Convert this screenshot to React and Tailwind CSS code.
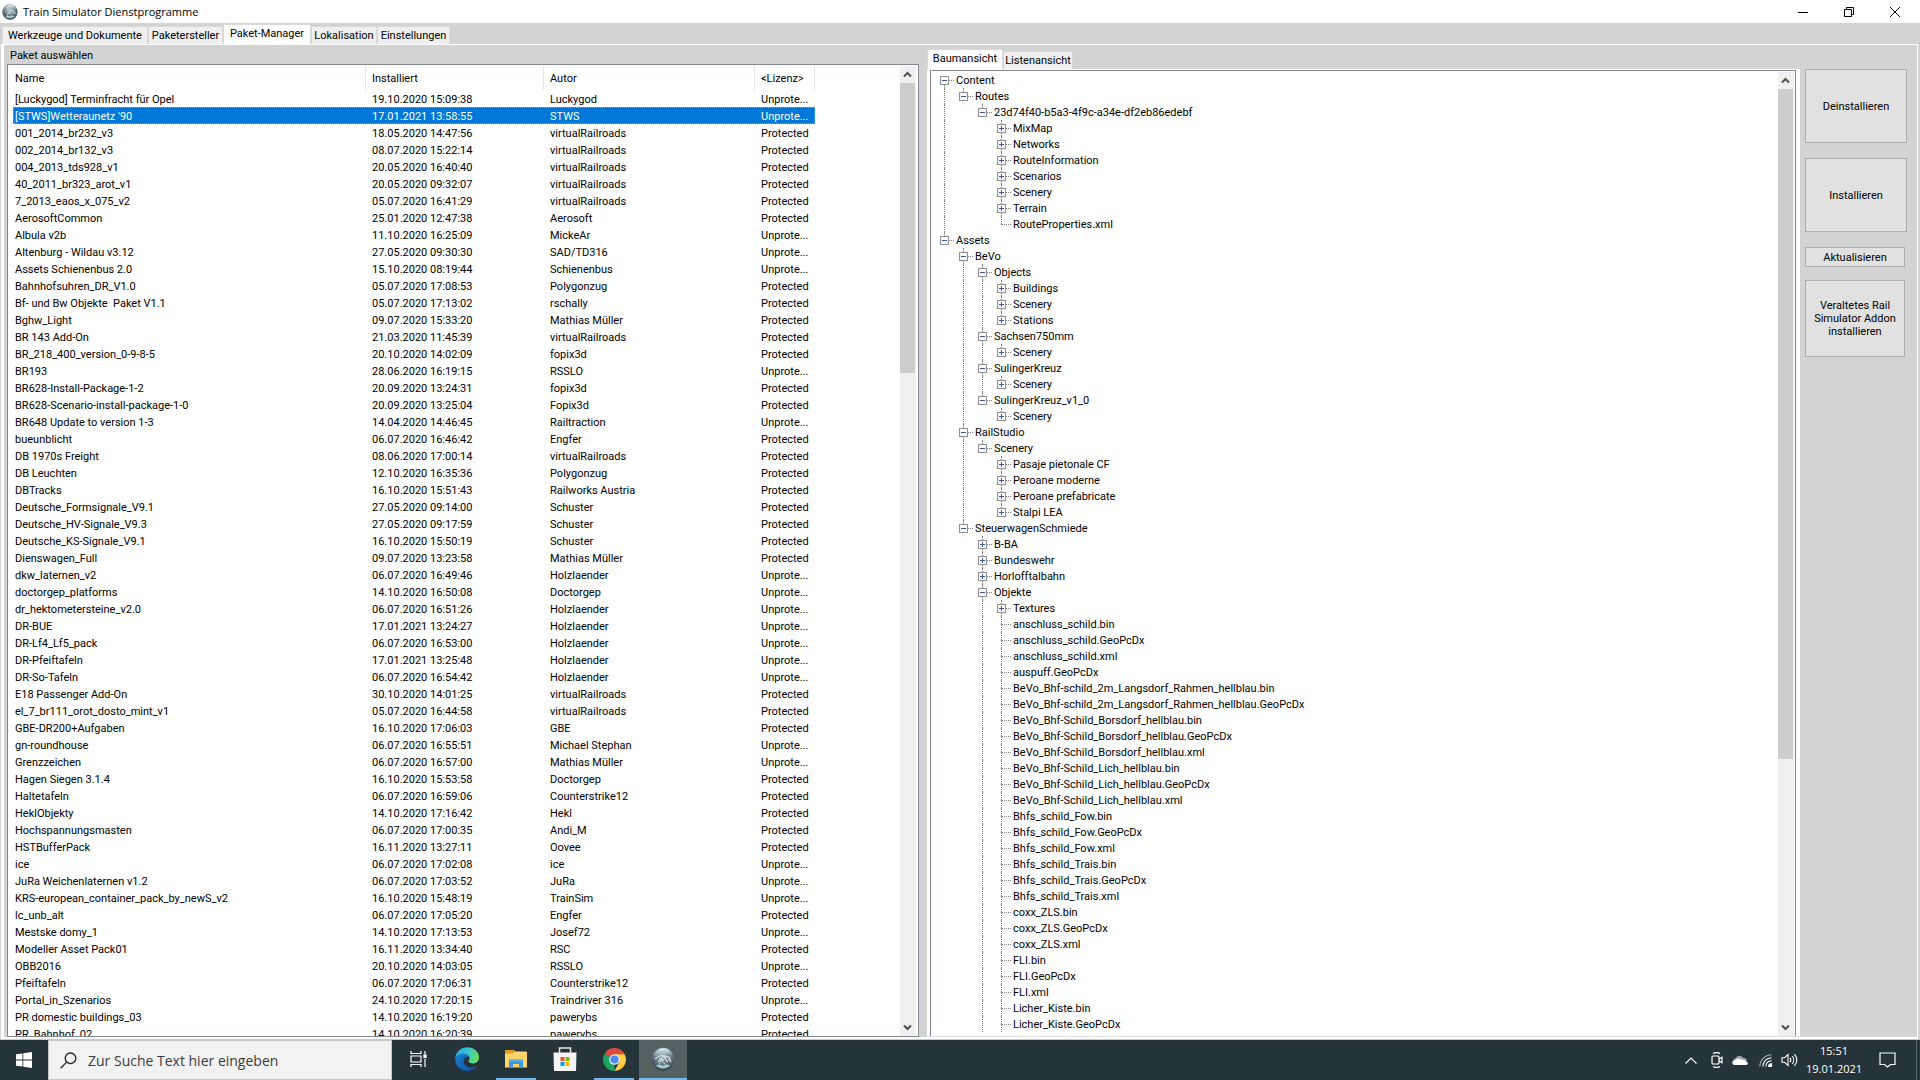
import { clsx } from "clsx";

const U = "Unprote...";
const P = "Protected";

const packages = [
  ["[Luckygod] Terminfracht für Opel", "19.10.2020 15:09:38", "Luckygod", U],
  ["[STWS]Wetteraunetz '90", "17.01.2021 13:58:55", "STWS", U],
  ["001_2014_br232_v3", "18.05.2020 14:47:56", "virtualRailroads", P],
  ["002_2014_br132_v3", "08.07.2020 15:22:14", "virtualRailroads", P],
  ["004_2013_tds928_v1", "20.05.2020 16:40:40", "virtualRailroads", P],
  ["40_2011_br323_arot_v1", "20.05.2020 09:32:07", "virtualRailroads", P],
  ["7_2013_eaos_x_075_v2", "05.07.2020 16:41:29", "virtualRailroads", P],
  ["AerosoftCommon", "25.01.2020 12:47:38", "Aerosoft", P],
  ["Albula v2b", "11.10.2020 16:25:09", "MickeAr", U],
  ["Altenburg - Wildau v3.12", "27.05.2020 09:30:30", "SAD/TD316", U],
  ["Assets Schienenbus 2.0", "15.10.2020 08:19:44", "Schienenbus", U],
  ["Bahnhofsuhren_DR_V1.0", "05.07.2020 17:08:53", "Polygonzug", P],
  ["Bf- und Bw Objekte  Paket V1.1", "05.07.2020 17:13:02", "rschally", P],
  ["Bghw_Light", "09.07.2020 15:33:20", "Mathias Müller", P],
  ["BR 143 Add-On", "21.03.2020 11:45:39", "virtualRailroads", P],
  ["BR_218_400_version_0-9-8-5", "20.10.2020 14:02:09", "fopix3d", P],
  ["BR193", "28.06.2020 16:19:15", "RSSLO", U],
  ["BR628-Install-Package-1-2", "20.09.2020 13:24:31", "fopix3d", P],
  ["BR628-Scenario-install-package-1-0", "20.09.2020 13:25:04", "Fopix3d", P],
  ["BR648 Update to version 1-3", "14.04.2020 14:46:45", "Railtraction", U],
  ["bueunblicht", "06.07.2020 16:46:42", "Engfer", P],
  ["DB 1970s Freight", "08.06.2020 17:00:14", "virtualRailroads", P],
  ["DB Leuchten", "12.10.2020 16:35:36", "Polygonzug", P],
  ["DBTracks", "16.10.2020 15:51:43", "Railworks Austria", P],
  ["Deutsche_Formsignale_V9.1", "27.05.2020 09:14:00", "Schuster", P],
  ["Deutsche_HV-Signale_V9.3", "27.05.2020 09:17:59", "Schuster", P],
  ["Deutsche_KS-Signale_V9.1", "16.10.2020 15:50:19", "Schuster", P],
  ["Dienswagen_Full", "09.07.2020 13:23:58", "Mathias Müller", P],
  ["dkw_laternen_v2", "06.07.2020 16:49:46", "Holzlaender", U],
  ["doctorgep_platforms", "14.10.2020 16:50:08", "Doctorgep", U],
  ["dr_hektometersteine_v2.0", "06.07.2020 16:51:26", "Holzlaender", U],
  ["DR-BUE", "17.01.2021 13:24:27", "Holzlaender", U],
  ["DR-Lf4_Lf5_pack", "06.07.2020 16:53:00", "Holzlaender", U],
  ["DR-Pfeiftafeln", "17.01.2021 13:25:48", "Holzlaender", U],
  ["DR-So-Tafeln", "06.07.2020 16:54:42", "Holzlaender", U],
  ["E18 Passenger Add-On", "30.10.2020 14:01:25", "virtualRailroads", P],
  ["el_7_br111_orot_dosto_mint_v1", "05.07.2020 16:44:58", "virtualRailroads", P],
  ["GBE-DR200+Aufgaben", "16.10.2020 17:06:03", "GBE", P],
  ["gn-roundhouse", "06.07.2020 16:55:51", "Michael Stephan", U],
  ["Grenzzeichen", "06.07.2020 16:57:00", "Mathias Müller", U],
  ["Hagen Siegen 3.1.4", "16.10.2020 15:53:58", "Doctorgep", P],
  ["Haltetafeln", "06.07.2020 16:59:06", "Counterstrike12", P],
  ["HeklObjekty", "14.10.2020 17:16:42", "Hekl", P],
  ["Hochspannungsmasten", "06.07.2020 17:00:35", "Andi_M", P],
  ["HSTBufferPack", "16.11.2020 13:27:11", "Oovee", P],
  ["ice", "06.07.2020 17:02:08", "ice", U],
  ["JuRa Weichenlaternen v1.2", "06.07.2020 17:03:52", "JuRa", U],
  ["KRS-european_container_pack_by_newS_v2", "16.10.2020 15:48:19", "TrainSim", U],
  ["lc_unb_alt", "06.07.2020 17:05:20", "Engfer", P],
  ["Mestske domy_1", "14.10.2020 17:13:53", "Josef72", U],
  ["Modeller Asset Pack01", "16.11.2020 13:34:40", "RSC", P],
  ["OBB2016", "20.10.2020 14:03:05", "RSSLO", U],
  ["Pfeiftafeln", "06.07.2020 17:06:31", "Counterstrike12", P],
  ["Portal_in_Szenarios", "24.10.2020 17:20:15", "Traindriver 316", U],
  ["PR domestic buildings_03", "14.10.2020 16:19:20", "pawerybs", P],
  ["PR_Bahnhof_02", "14.10.2020 16:20:39", "pawerybs", P],
];

// [depth, toggle, label]: "-" open folder, "+" closed folder, "" file
const nodes = [
  [0, "-", "Content"],
  [1, "-", "Routes"],
  [2, "-", "23d74f40-b5a3-4f9c-a34e-df2eb86edebf"],
  [3, "+", "MixMap"],
  [3, "+", "Networks"],
  [3, "+", "RouteInformation"],
  [3, "+", "Scenarios"],
  [3, "+", "Scenery"],
  [3, "+", "Terrain"],
  [3, "", "RouteProperties.xml"],
  [0, "-", "Assets"],
  [1, "-", "BeVo"],
  [2, "-", "Objects"],
  [3, "+", "Buildings"],
  [3, "+", "Scenery"],
  [3, "+", "Stations"],
  [2, "-", "Sachsen750mm"],
  [3, "+", "Scenery"],
  [2, "-", "SulingerKreuz"],
  [3, "+", "Scenery"],
  [2, "-", "SulingerKreuz_v1_0"],
  [3, "+", "Scenery"],
  [1, "-", "RailStudio"],
  [2, "-", "Scenery"],
  [3, "+", "Pasaje pietonale CF"],
  [3, "+", "Peroane moderne"],
  [3, "+", "Peroane prefabricate"],
  [3, "+", "Stalpi LEA"],
  [1, "-", "SteuerwagenSchmiede"],
  [2, "+", "B-BA"],
  [2, "+", "Bundeswehr"],
  [2, "+", "Horlofftalbahn"],
  [2, "-", "Objekte"],
  [3, "+", "Textures"],
  [3, "", "anschluss_schild.bin"],
  [3, "", "anschluss_schild.GeoPcDx"],
  [3, "", "anschluss_schild.xml"],
  [3, "", "auspuff.GeoPcDx"],
  [3, "", "BeVo_Bhf-schild_2m_Langsdorf_Rahmen_hellblau.bin"],
  [3, "", "BeVo_Bhf-schild_2m_Langsdorf_Rahmen_hellblau.GeoPcDx"],
  [3, "", "BeVo_Bhf-Schild_Borsdorf_hellblau.bin"],
  [3, "", "BeVo_Bhf-Schild_Borsdorf_hellblau.GeoPcDx"],
  [3, "", "BeVo_Bhf-Schild_Borsdorf_hellblau.xml"],
  [3, "", "BeVo_Bhf-Schild_Lich_hellblau.bin"],
  [3, "", "BeVo_Bhf-Schild_Lich_hellblau.GeoPcDx"],
  [3, "", "BeVo_Bhf-Schild_Lich_hellblau.xml"],
  [3, "", "Bhfs_schild_Fow.bin"],
  [3, "", "Bhfs_schild_Fow.GeoPcDx"],
  [3, "", "Bhfs_schild_Fow.xml"],
  [3, "", "Bhfs_schild_Trais.bin"],
  [3, "", "Bhfs_schild_Trais.GeoPcDx"],
  [3, "", "Bhfs_schild_Trais.xml"],
  [3, "", "coxx_ZLS.bin"],
  [3, "", "coxx_ZLS.GeoPcDx"],
  [3, "", "coxx_ZLS.xml"],
  [3, "", "FLI.bin"],
  [3, "", "FLI.GeoPcDx"],
  [3, "", "FLI.xml"],
  [3, "", "Licher_Kiste.bin"],
  [3, "", "Licher_Kiste.GeoPcDx"],
];

// Levels whose list goes on below the visible part of the tree
const continuedLevels = [2, 3];

function hasLaterSibling(index, depth) {
  for (let i = index + 1; i < nodes.length; i++) {
    if (nodes[i][0] < depth) return false;
    if (nodes[i][0] === depth) return true;
  }
  return continuedLevels.includes(depth);
}

function AppGlobe({ className }) {
  return (
    <svg viewBox="0 0 24 24" className={className} aria-hidden="true">
      <defs>
        <radialGradient id="globe" cx="0.5" cy="0.3" r="0.75">
          <stop offset="0" stopColor="#a4b4bb" />
          <stop offset="0.6" stopColor="#5c6f78" />
          <stop offset="1" stopColor="#2c3a42" />
        </radialGradient>
        <linearGradient id="gloss" x1="0" y1="0" x2="0" y2="1">
          <stop offset="0" stopColor="#eef6f8" />
          <stop offset="1" stopColor="#9db4bc" stopOpacity="0.3" />
        </linearGradient>
      </defs>
      <circle cx="12" cy="12" r="11.5" fill="url(#globe)" />
      <path d="M2.500 8.500C4 4 8 1.300 12.500 1.300s8 2.700 9.200 7C18 6.500 14 6.200 11 7.500S5 9.500 2.500 8.500z" fill="url(#gloss)" />
      <path d="M4 12c3-3 6-4 9-3l5 1c1 2 1 3 2 5" fill="none" stroke="#cfdbe0" strokeWidth="1.300" />
      <path d="M7 15l3-4 2 3 2-4 2 5 2-3M8 12l6 5M12 9l-4 8" fill="none" stroke="#dfe8eb" strokeWidth="0.900" />
      <path d="M4.500 18c3 4 11 5 15 0-1 .2-3 .3-4-1-2 2-5 2-7 0-1 1-3 1.500-4 1z" fill="#b8dbe2" opacity="0.85" />
    </svg>
  );
}

function Tab({ active, width, children }) {
  return (
    <button
      type="button"
      role="tab"
      aria-selected={!!active}
      className={clsx(
        "border border-b-0 border-[#d9d9d9] whitespace-nowrap text-center",
        width,
        active ? "h-5 bg-white pb-0.5" : "h-[18px] bg-[#f0f0f0]"
      )}
    >
      {children}
    </button>
  );
}

function ScrollArrow({ down }) {
  return (
    <button type="button" aria-label={down ? "Nach unten" : "Nach oben"} className="flex h-[17px] w-[15px] shrink-0 items-center justify-center bg-[#f0f0f0]">
      <svg width="9" height="7" viewBox="0 0 9 7" fill="none" stroke="#505050" strokeWidth="2">
        <path d={down ? "M1 1.500L4.500 5 8 1.500" : "M1 5.500L4.500 2 8 5.500"} />
      </svg>
    </button>
  );
}

function Scrollbar({ thumb }) {
  return (
    <div className="flex w-4 shrink-0 flex-col bg-[#f0f0f0]">
      <ScrollArrow />
      <div className="min-h-0 flex-1">
        <div className={clsx("w-[15px] bg-[#cdcdcd]", thumb)} />
      </div>
      <ScrollArrow down />
    </div>
  );
}

function PackageTable() {
  const head = "h-6 border-r border-[#e5e5e5] py-0 pt-0.5 text-left font-normal";
  const cell = "truncate py-0 pr-0 pt-0.5 leading-[15px]";
  return (
    <table className="w-[802px] shrink-0 table-fixed border-separate border-spacing-0">
      <colgroup>
        <col className="w-[353px]" />
        <col className="w-[178px]" />
        <col className="w-[211px]" />
        <col className="w-[60px]" />
      </colgroup>
      <thead>
        <tr>
          <th className={clsx(head, "pl-0.5")}>Name</th>
          <th className={clsx(head, "pl-1.5")}>Installiert</th>
          <th className={clsx(head, "pl-1.5")}>Autor</th>
          <th className={clsx(head, "pl-1.5")}>&lt;Lizenz&gt;</th>
        </tr>
      </thead>
      <tbody>
        {packages.map(([name, date, author, license], i) => (
          <tr
            key={name}
            aria-selected={i === 1}
            className={clsx("h-[17px]", i === 1 && "bg-[#0078d7] text-white outline-1 -outline-offset-1 outline-dotted outline-[#ff8728]")}
          >
            <td className={clsx(cell, "pl-0.5 whitespace-pre")}>{name}</td>
            <td className={clsx(cell, "pl-1.5")}>{date}</td>
            <td className={clsx(cell, "pl-1.5")}>{author}</td>
            <td className={clsx(cell, "pl-1.5")}>{license}</td>
          </tr>
        ))}
      </tbody>
    </table>
  );
}

function Toggle({ kind }) {
  return (
    <button type="button" aria-label={kind === "+" ? "Erweitern" : "Reduzieren"} className="h-[9px] w-[9px] shrink-0">
      <svg width="9" height="9" viewBox="0 0 9 9" shapeRendering="crispEdges">
        <rect width="9" height="9" fill="#919191" />
        <rect x="1" y="1" width="7" height="7" fill="#fbfbfb" />
        <rect x="2" y="4" width="5" height="1" fill="#3b57a0" />
        {kind === "+" && <rect x="4" y="2" width="1" height="5" fill="#3b57a0" />}
      </svg>
    </button>
  );
}

function TreeRow({ index }) {
  const [depth, kind, label] = nodes[index];
  const guides = Array.from({ length: depth }, (_, d) => hasLaterSibling(index, d));
  return (
    <li className="flex h-4 items-center whitespace-nowrap">
      {guides.map((on, d) => (
        <span key={d} className="flex h-full w-[19px] shrink-0 pl-[9px]">
          {on && <span className="border-l border-dotted border-[#808080]" />}
        </span>
      ))}
      <span className="grid h-full w-[19px] shrink-0 items-center [&>*]:col-start-1 [&>*]:row-start-1">
        <span className="flex h-full flex-col pl-[9px]">
          <span className={clsx("h-2", index > 0 && "border-l border-dotted border-[#808080]")} />
          <span className={clsx("h-2", hasLaterSibling(index, depth) && "border-l border-dotted border-[#808080]")} />
        </span>
        <span className="ml-[9px] border-t border-dotted border-[#808080]" />
        {kind && (
          <span className="flex pl-[5px]">
            <Toggle kind={kind} />
          </span>
        )}
      </span>
      <span className="pt-0.5 pl-0.5 leading-[14px]">{label}</span>
    </li>
  );
}

function ActionButton({ className, children }) {
  return (
    <button type="button" className={clsx("border border-[#adadad] bg-[#e1e1e1] px-2 leading-[13px]", className)}>
      {children}
    </button>
  );
}

function TaskButton({ label, running, active, children }) {
  return (
    <button
      type="button"
      aria-label={label}
      className={clsx("flex h-full w-12 shrink-0 flex-col items-center", active && "bg-[#546163]")}
    >
      <span className="flex flex-1 items-center">{children}</span>
      <span className={clsx("h-0.5", active ? "w-full" : "w-10", running && "bg-[#76b9ed]")} />
    </button>
  );
}

function Taskbar() {
  return (
    <footer className="flex h-10 shrink-0 items-center bg-[#243439] font-['Open_Sans',sans-serif] text-white">
      <button type="button" aria-label="Start" className="flex h-full w-12 shrink-0 items-center justify-center">
        <svg width="16" height="16" viewBox="0 0 16 16" fill="#fff">
          <path d="M0 2.300L6.500 1.400V7.600H0zM7.300 1.300L16 0V7.600H7.300zM0 8.400H6.500V14.600L0 13.700zM7.300 8.400H16V16L7.300 14.700z" />
        </svg>
      </button>
      <label className="flex h-full w-[344px] shrink-0 items-center gap-[11px] border border-[#c8c8c8] bg-[#f2f2f2] pl-[11px] text-[#3b3b3b]">
        <svg width="17" height="17" viewBox="0 0 17 17" fill="none" stroke="#222" strokeWidth="1.300">
          <circle cx="10.500" cy="6.300" r="5.300" />
          <path d="M6.700 10.100L0.600 16.300" />
        </svg>
        <input type="text" aria-label="Suche" placeholder="Zur Suche Text hier eingeben" className="min-w-0 flex-1 bg-transparent pt-0.5 text-sm outline-none placeholder:text-[#3b3b3b] placeholder:opacity-100" />
      </label>
      <div className="flex h-full gap-px pl-0.5">
        <TaskButton label="Taskansicht">
          <svg width="17" height="16" viewBox="0 0 17 16" fill="none" stroke="#fff" strokeWidth="1.200">
            <path d="M1 0v2.500h10V0M1 16v-2.500h10V16M1 5h10v6H1zM15 0v3M15 8v8" />
            <rect x="14" y="4" width="2" height="2.500" fill="#fff" />
          </svg>
        </TaskButton>
        <TaskButton label="Microsoft Edge">
          <svg width="24" height="24" viewBox="0 0 24 24">
            <defs>
              <linearGradient id="edgeTop" x1="0" y1="0.300" x2="1" y2="0.500">
                <stop offset="0" stopColor="#2aa7e0" />
                <stop offset="0.500" stopColor="#35c4cf" />
                <stop offset="1" stopColor="#6be05a" />
              </linearGradient>
              <linearGradient id="edgeLow" x1="0" y1="0" x2="0.800" y2="1">
                <stop offset="0" stopColor="#1a86d8" />
                <stop offset="1" stopColor="#12509f" />
              </linearGradient>
            </defs>
            <path d="M0.200 11C1 4.500 6 0.200 12.300 0.200 19 0.200 24 5 24 10.500c0 3.800-2.800 6-6 6-2.800 0-4.500-1-4.500-2.200 0-.8 1-1.200 1-3 0-2.300-2.500-4.300-5.500-4.300C5 7 1.800 8.800 0.200 11z" fill="url(#edgeTop)" />
            <path d="M0.200 11C1.800 7.800 5.500 6 9 6.500c2.500.3 4 1.500 4.800 2.700-2.300-.4-5.300 1.300-5.300 5 0 4 4 6.600 8 6.300 2-.2 3.500-.8 5.300-2-1.800 3.300-5.500 5.500-9.800 5.500C5 24 0 18.500 0.200 11z" fill="url(#edgeLow)" />
            <path d="M9 12.500c-1.500 3 .5 7.500 4.500 9-4 1-8.500-2-8.500-6.500 0-3.500 2.500-5.500 4.500-6 2-.4 3.700 0 4.300.2-2 .1-3.800 1.300-4.800 3.300z" fill="#1668b8" />
          </svg>
        </TaskButton>
        <TaskButton label="Explorer" running>
          <svg width="22" height="18" viewBox="0 0 22 18">
            <path d="M0 0h9l2 2.500H0z" fill="#e8a317" />
            <rect y="1.500" width="22" height="16" rx="0.600" fill="#ffd56b" />
            <path d="M0 1h9.500l-1.500 2.500H0z" fill="#e09b15" />
            <path d="M4 9.500h14V18h-4v-4H8v4H4z" fill="#3a96dd" />
            <path d="M4 9.500h14v2H4z" fill="#5cb2ee" />
          </svg>
        </TaskButton>
        <TaskButton label="Microsoft Store">
          <svg width="24" height="24" viewBox="0 0 24 24">
            <path d="M6.500 6V1h11v5" fill="none" stroke="#e6e6e6" strokeWidth="1.500" />
            <path d="M0.500 5.500h23L23 24H1z" fill="#f3f3f3" />
            <path d="M7.500 10h4v4h-4z" fill="#f25022" />
            <path d="M12.500 10h4v4h-4z" fill="#7fba00" />
            <path d="M7.500 15h4v4h-4z" fill="#00a4ef" />
            <path d="M12.500 15h4v4h-4z" fill="#ffb900" />
          </svg>
        </TaskButton>
        <TaskButton label="Google Chrome" running>
          <svg width="23" height="23" viewBox="0 0 24 24">
            <path d="M12 12L1.600 6A12 12 0 0 1 22.400 6z" fill="#dd4b3e" />
            <path d="M12 12V24A12 12 0 0 1 1.600 6L7.200 9z" fill="#1da462" />
            <path d="M12 6.500H22.600A12 12 0 0 1 12 24L17 14.500z" fill="#ffcd46" />
            <circle cx="12" cy="12" r="5.500" fill="#f1f1f1" />
            <circle cx="12" cy="12" r="4.300" fill="#4c8bf5" />
          </svg>
        </TaskButton>
        <TaskButton label="Train Simulator Dienstprogramme" running active>
          <AppGlobe className="h-6 w-6" />
        </TaskButton>
      </div>
      <div className="ml-auto flex h-full items-center">
        <svg width="12" height="7" viewBox="0 0 12 7" fill="none" stroke="#fff" strokeWidth="1.200" className="mr-3.5">
          <path d="M0.500 6.500L6 1l5.500 5.500" />
        </svg>
        <svg width="12" height="16" viewBox="0 0 12 16" fill="none" stroke="#fff" strokeWidth="1.200" className="mr-[9px]">
          <rect x="1" y="4" width="7" height="8" rx="1" />
          <path d="M8 7l3-1.800v5.600L8 9M2 1.500C4 .4 7 .4 9 1.500M2 14.500c2 1.100 5 1.100 7 0" />
        </svg>
        <svg width="16" height="10" viewBox="0 0 16 10" className="mr-[11px]">
          <path d="M3 8C.5 7 1 3.500 3.700 3.300 5 .2 9.500-.3 11 2.800c2.500 0 4 1.500 4 3.500z" fill="#9aa3a6" />
          <path d="M2.500 10C-.8 9.500-.3 5 3.200 5.200 5 3 8.500 3.500 9.800 5c2-1 4 .3 4 1.600C16.500 6.800 16.600 10 14 10z" fill="#fff" />
        </svg>
        <svg width="14" height="13" viewBox="0 0 14 13" fill="none" stroke="#fff" strokeWidth="1.100" className="mr-2">
          <path d="M.8 12.500C1 6 6 1 12.500.8" opacity="0.600" />
          <path d="M3.800 12.500C4 7.500 7.500 4 12.500 3.800M6.800 12.500C7 9 9 7 12.500 6.800" />
          <path d="M9.500 12.500c0-1.500 1.200-2.700 3-2.800v2.800z" fill="#fff" />
        </svg>
        <svg width="17" height="14" viewBox="0 0 17 14" fill="none" stroke="#fff" strokeWidth="1.100" className="mr-1.5">
          <path d="M1 4.800h2.500L7 1.500v11L3.500 9.200H1zM9 4.800c1 1.300 1 3.100 0 4.400M11.200 3c2 2.300 2 5.700 0 8M13.500 1.200c3 3.300 3 8.300 0 11.600" />
        </svg>
        <div className="w-[60px] text-center text-[11px] leading-[18px]">
          <div>15:51</div>
          <div>19.01.2021</div>
        </div>
        <button type="button" aria-label="Info-Center" className="ml-[15px]">
          <svg width="17" height="16" viewBox="0 0 17 16" fill="none" stroke="#fff" strokeWidth="1.200">
            <path d="M1 1h15v11.500h-4.500L8.500 15l-3-2.500H1z" />
          </svg>
        </button>
        <span className="ml-5 h-full w-1 border-l border-[#5c686c]" />
      </div>
    </footer>
  );
}

export default function App() {
  return (
    <div className="flex h-screen flex-col overflow-hidden bg-[#d3d3d3] font-['Roboto',sans-serif] text-[11px] leading-4 text-black">
      <header className="flex h-[23px] shrink-0 items-center bg-white pl-0.5 font-['Open_Sans',sans-serif]">
        <AppGlobe className="h-4 w-4" />
        <h1 className="ml-[5px]">Train Simulator Dienstprogramme</h1>
        <div className="ml-auto flex items-center gap-9 pr-5">
          <button type="button" aria-label="Minimieren">
            <svg width="10" height="10" viewBox="0 0 10 10" stroke="#000"><path d="M0 5.500h10" /></svg>
          </button>
          <button type="button" aria-label="Wiederherstellen">
            <svg width="10" height="10" viewBox="0 0 10 10" fill="none" stroke="#000"><path d="M.5 2.500h7v7h-7zM2.500 2.500v-2h7v7h-2" /></svg>
          </button>
          <button type="button" aria-label="Schließen">
            <svg width="10" height="10" viewBox="0 0 10 10" stroke="#000"><path d="M0 0l10 10M10 0L0 10" /></svg>
          </button>
        </div>
      </header>

      <nav role="tablist" className="flex h-[21px] shrink-0 items-end pl-0.5">
        <Tab width="w-[146px]">Werkzeuge und Dokumente</Tab>
        <Tab width="w-[75px]">Paketersteller</Tab>
        <Tab active width="w-[88px]">Paket-Manager</Tab>
        <Tab width="w-[66px]">Lokalisation</Tab>
        <Tab width="w-[73px]">Einstellungen</Tab>
      </nav>

      <main className="ml-px mr-0.5 grid min-h-0 flex-1 grid-cols-[915fr_881fr_117px] border-t border-b-2 border-l-[3px] border-r border-white">
        <section className="flex min-h-0 flex-col pl-[3px]">
          <h2 className="h-[19px] pt-0.5 pl-[3px] leading-[17px]">Paket auswählen</h2>
          <div className="flex min-h-0 flex-1 border border-[#828790] bg-white pt-px pr-0.5">
            <div className="min-w-0 flex-1 overflow-hidden pl-[5px]">
              <PackageTable />
            </div>
            <Scrollbar thumb="h-[31%]" />
          </div>
        </section>

        <section className="flex min-h-0 flex-col pt-1 pl-2">
          <div role="tablist" className="flex h-5 shrink-0 items-end">
            <Tab active width="w-[76px]">Baumansicht</Tab>
            <Tab width="w-[70px]">Listenansicht</Tab>
          </div>
          <div className="flex min-h-0 flex-1 flex-col border-b border-[#dcdcdc] bg-white pt-px pr-1 pl-[3px]">
            <div className="flex min-h-0 flex-1 border border-b-0 border-[#828790] pt-px pr-px">
              <ul className="min-w-0 flex-1 overflow-hidden pl-1">
                {nodes.map((_, i) => (
                  <TreeRow key={i} index={i} />
                ))}
              </ul>
              <Scrollbar thumb="h-[72%]" />
            </div>
          </div>
        </section>

        <aside className="flex flex-col items-start pt-6 pl-[5px]">
          <ActionButton className="h-[74px] w-[102px]">Deinstallieren</ActionButton>
          <ActionButton className="mt-[15px] h-[74px] w-[102px]">Installieren</ActionButton>
          <ActionButton className="mt-[15px] h-5 w-[100px]">Aktualisieren</ActionButton>
          <ActionButton className="mt-[13px] h-[77px] w-[100px]">Veraltetes Rail Simulator Addon installieren</ActionButton>
        </aside>
      </main>
      <div className="h-px shrink-0 bg-[#c8c8c8]" />
      <Taskbar />
    </div>
  );
}
